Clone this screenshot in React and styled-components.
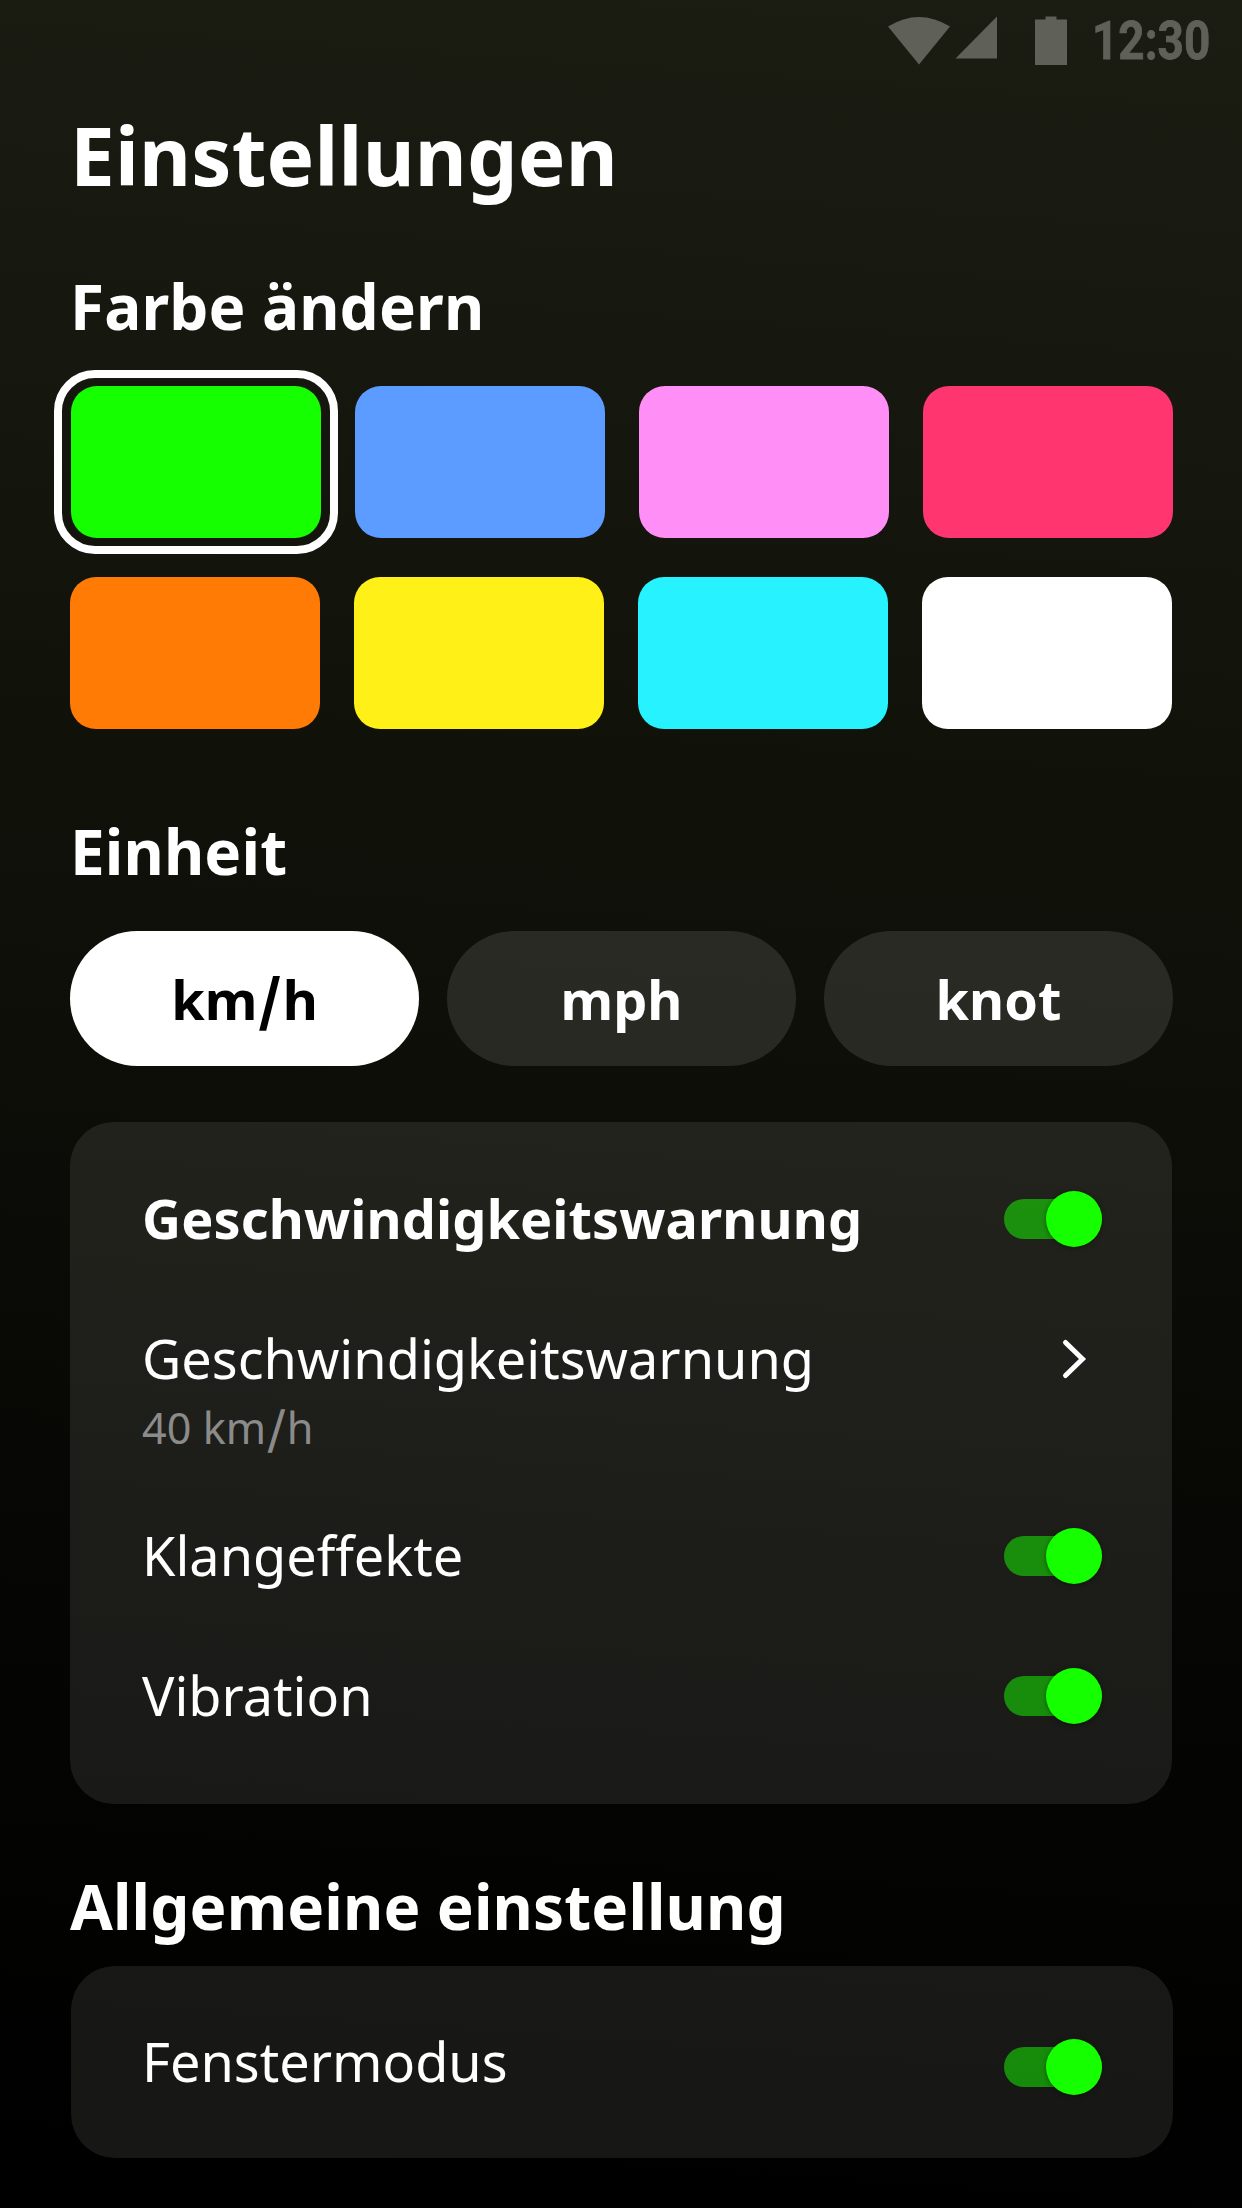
import React from 'react';
import styled, { createGlobalStyle } from 'styled-components';

const GlobalStyle = createGlobalStyle`
  * {
    box-sizing: border-box;
  }

  body {
    margin: 0;
    background: #000;
  }
`;

const Screen = styled.main`
  width: 1242px;
  height: 2208px;
  overflow: hidden;
  padding: 0 69px 0 70px;
  background: linear-gradient(184deg, #1b1d13 0%, #16180f 18%, #10120a 36%, #0d0e08 50%, #060604 70%, #030302 84%, #000 97%);
  color: white;
  font-family: 'Noto Sans', sans-serif;
`;

const StatusBar = styled.header`
  display: flex;
  align-items: flex-start;
  justify-content: flex-end;
  height: 82px;
  margin-right: -69px;
  padding: 16px 33px 0 0;
  color: #5f6159;
`;

const StatusIcons = styled.svg`
  width: 180px;
  height: 50px;
  margin-right: 25px;
  fill: currentColor;
`;

const Clock = styled.span`
  width: 116px;
  font-family: Roboto, sans-serif;
  font-size: 54px;
  font-weight: 700;
  line-height: 50px;
  white-space: nowrap;
  transform: translateX(-1px) scaleX(0.85);
  transform-origin: left;
  -webkit-text-stroke: 0.8px currentColor;
`;

const Title = styled.h1`
  margin: 19px 0 55px;
  font-size: 80px;
  font-weight: 700;
  letter-spacing: 0.2px;
  line-height: 108px;
`;

const SectionTitle = styled.h2`
  margin: ${(props) => props.$margin};
  font-size: 62px;
  font-weight: 700;
  letter-spacing: 0.12px;
  line-height: 84px;
`;

const SwatchRow = styled.div`
  display: flex;
  gap: 34px;
  padding-left: ${(props) => props.$inset || '0'};

  & + & {
    margin-top: 39px;
  }
`;

const Swatch = styled.button`
  position: relative;
  flex: none;
  width: 250px;
  height: 152px;
  padding: 0;
  border: none;
  border-radius: 26px;
  background: ${(props) => props.$color};
`;

const SelectedRing = styled.span`
  position: absolute;
  inset: -16px -17px;
  border: 8px solid white;
  border-radius: 41px;
`;

const UnitRow = styled.div`
  display: grid;
  grid-template-columns: repeat(3, 1fr);
  gap: 28px;
  margin-bottom: 56px;
`;

const UnitButton = styled.button`
  height: 135px;
  padding: 1px 0 0;
  border: none;
  border-radius: 68px;
  background: ${(props) => (props.$active ? 'white' : 'rgba(255, 255, 250, 0.11)')};
  color: ${(props) => (props.$active ? 'black' : 'white')};
  font-family: inherit;
  font-size: 54px;
  font-weight: 700;
  line-height: 72px;
`;

const Slash = styled.span`
  margin: 0 0.042em;
  font-family: 'Noto Sans CJK JP', sans-serif;
  line-height: 1;
  -webkit-text-stroke: 0.03em currentColor;
`;

const Card = styled.section`
  height: ${(props) => props.$height};
  margin: ${(props) => props.$margin};
  padding: ${(props) => props.$padding};
  border-radius: 44px;
  background: rgba(255, 255, 245, 0.09);
`;

const Row = styled.div`
  display: flex;
  align-items: center;
  justify-content: space-between;
  height: 140px;
`;

const DetailRow = styled(Row)`
  align-items: flex-start;
  height: 197px;
  padding-top: 33px;
`;

const Label = styled.div`
  margin-top: ${(props) => props.$shift || '-2px'};
  font-size: 54px;
  font-weight: ${(props) => (props.$bold ? 700 : 400)};
  letter-spacing: ${(props) => (props.$bold ? '0.1px' : 'normal')};
  line-height: 72px;
`;

const Hint = styled.div`
  margin-top: 5px;
  color: #8b8b8a;
  font-size: 43.2px;
  line-height: 58px;
`;

const Chevron = styled.svg`
  width: 30px;
  height: 44px;
  margin: 15px 11px 0 0;
  fill: none;
  stroke: white;
  stroke-width: 5;
  stroke-linecap: round;
`;

const Track = styled.div`
  display: flex;
  align-items: center;
  justify-content: flex-end;
  width: 98px;
  height: 40px;
  border-radius: 20px;
  background: rgba(21, 255, 0, 0.5);
`;

const Knob = styled.span`
  flex: none;
  width: 56px;
  height: 56px;
  border-radius: 50%;
  background: #15ff00;
  box-shadow: 0 1px 5px rgba(0, 0, 0, 0.4);
`;

const Toggle = () => (
  <Track role="switch" aria-checked="true">
    <Knob />
  </Track>
);

const topColors = ['#15ff00', '#5c9bff', '#ff8ff6', '#ff3570'];
const bottomColors = ['#ff7b05', '#fff017', '#26f3ff', '#ffffff'];

const App = () => {
  return (
    <Screen>
      <GlobalStyle />
      <StatusBar>
        <StatusIcons viewBox="0 0 180 50">
          <path d="M0 10.500Q31-8.500 62 10.500L31 48.500Z" />
          <path d="M67.500 42.500L109 .5V42.500Z" />
          <path d="M147 3.500H157.500V.5H168.500V3.500H179V49H147Z" />
        </StatusIcons>
        <Clock>12:30</Clock>
      </StatusBar>

      <Title>Einstellungen</Title>

      <SectionTitle $margin="0 0 38px">Farbe ändern</SectionTitle>
      <SwatchRow $inset="1px">
        {topColors.map((color, i) => (
          <Swatch key={color} $color={color}>
            {i === 0 && <SelectedRing />}
          </Swatch>
        ))}
      </SwatchRow>
      <SwatchRow>
        {bottomColors.map((color) => (
          <Swatch key={color} $color={color} />
        ))}
      </SwatchRow>

      <SectionTitle $margin="80px 0 38px">Einheit</SectionTitle>
      <UnitRow>
        <UnitButton $active>km<Slash>/</Slash>h</UnitButton>
        <UnitButton>mph</UnitButton>
        <UnitButton>knot</UnitButton>
      </UnitRow>

      <Card $height="682px" $margin="0 1px 0 0" $padding="27px 70px 0 72px">
        <Row>
          <Label $bold>Geschwindigkeitswarnung</Label>
          <Toggle />
        </Row>
        <DetailRow>
          <div>
            <Label $shift="0">Geschwindigkeitswarnung</Label>
            <Hint>40 km<Slash>/</Slash>h</Hint>
          </div>
          <Chevron viewBox="0 0 30 44">
            <path d="M4.500 5.500L21.500 22L4.500 38.500" />
          </Chevron>
        </DetailRow>
        <Row>
          <Label>Klangeffekte</Label>
          <Toggle />
        </Row>
        <Row>
          <Label>Vibration</Label>
          <Toggle />
        </Row>
      </Card>

      <SectionTitle $margin="60px 0 18px">Allgemeine einstellung</SectionTitle>
      <Card $height="192px" $margin="0 0 0 1px" $padding="31px 71px 0 71px">
        <Row>
          <Label $shift="-12px">Fenstermodus</Label>
          <Toggle />
        </Row>
      </Card>
    </Screen>
  );
};

export default App;
